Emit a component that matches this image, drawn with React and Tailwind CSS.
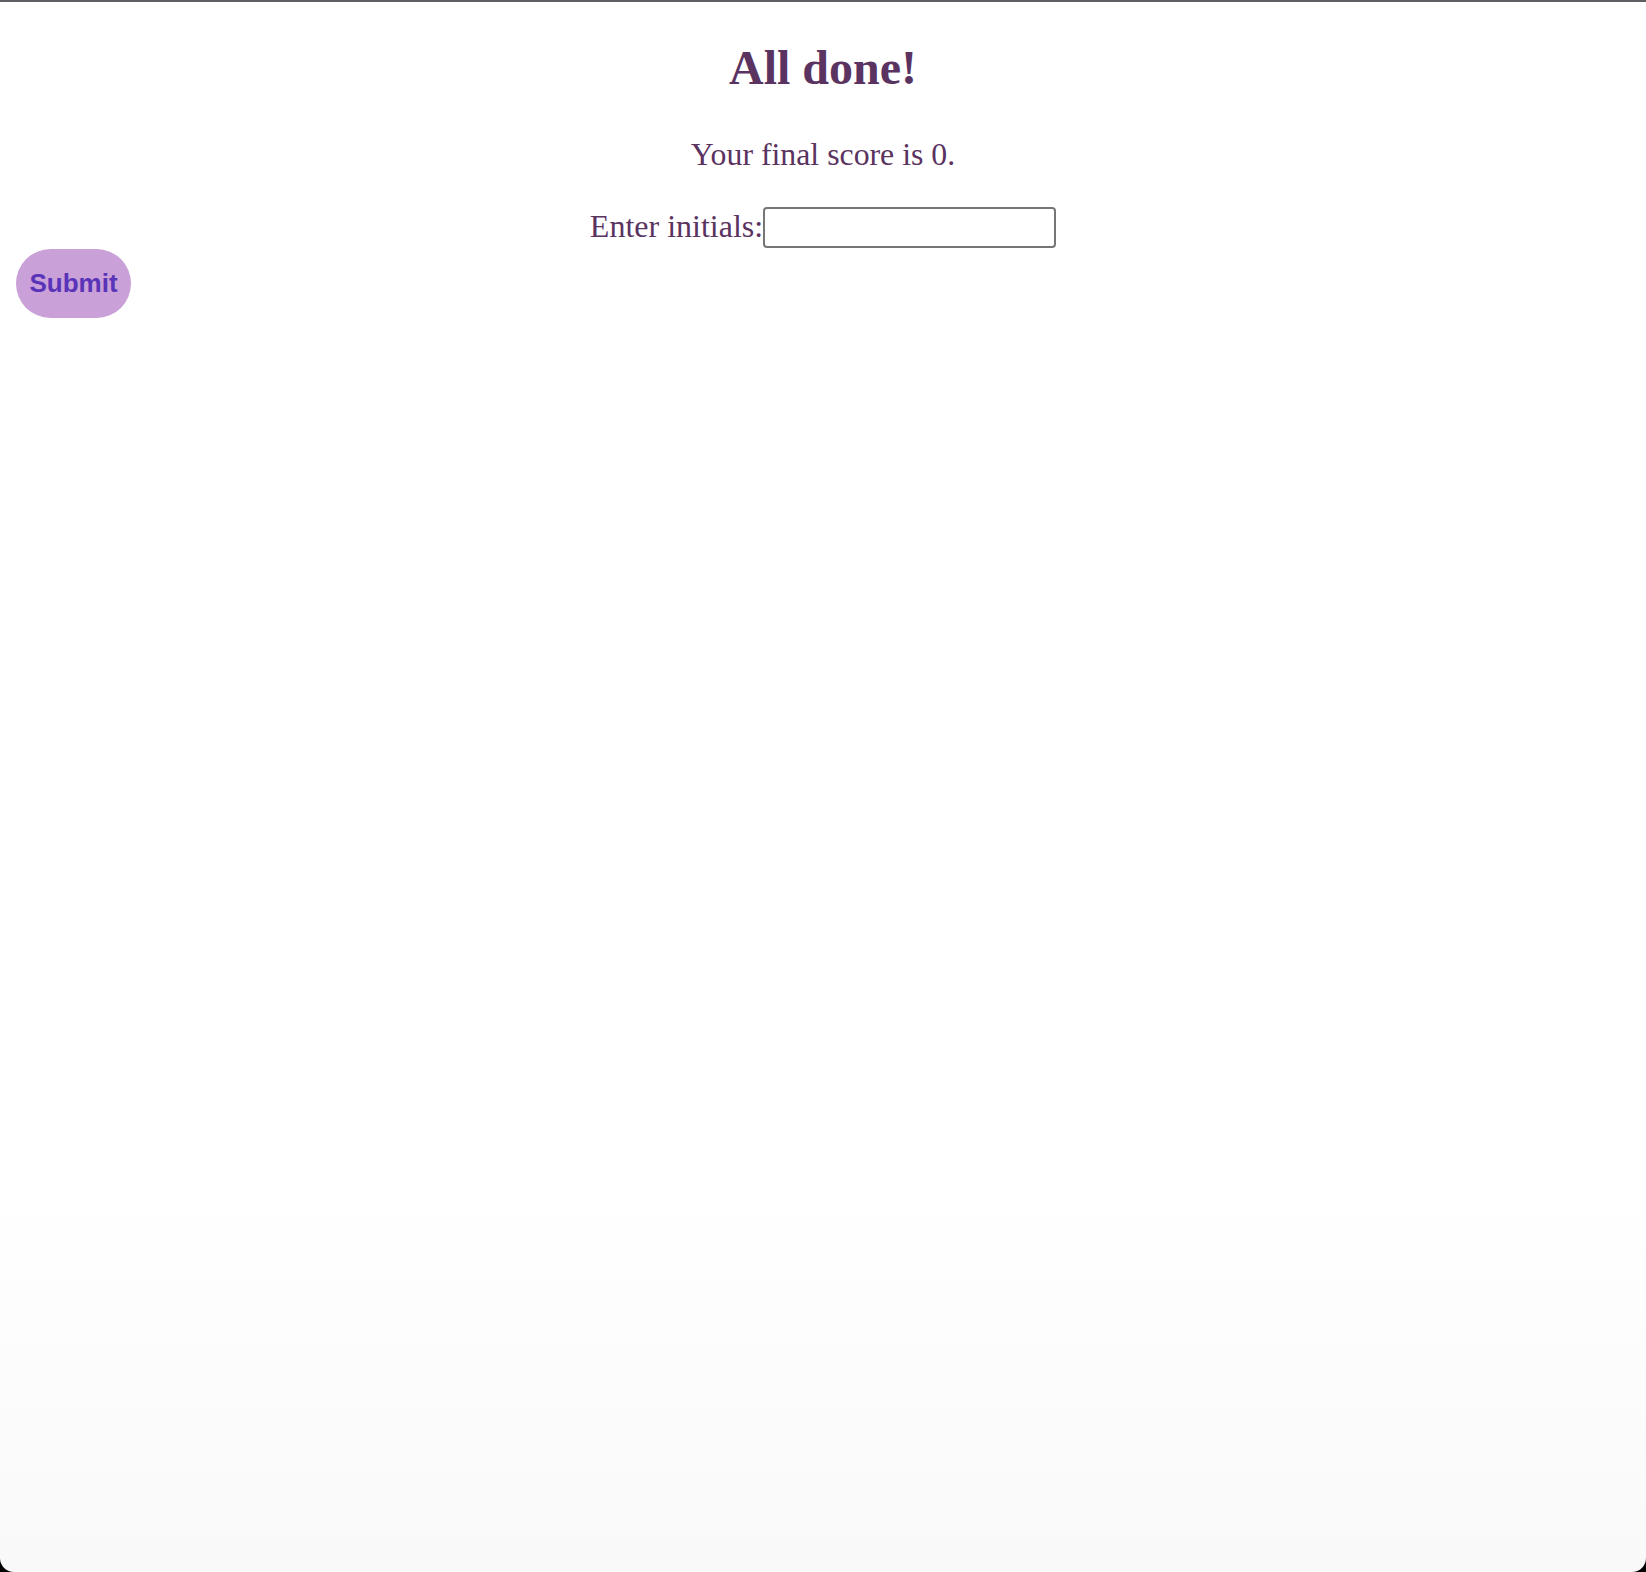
export default function App() {
  return (
    <div className="bg-black h-[1572px] w-full">
      <div
        className="h-full w-full bg-gradient-to-b from-white from-75% to-[#f9f9f9] border-t-2 border-[#5f5f63] rounded-b-[14px] flex flex-col text-[#5a3361]"
        style={{ fontFamily: '"Liberation Serif", "Times New Roman", serif' }}
      >
        {/* Heading */}
        <h1 className="mt-[39px] text-center font-bold text-[48px] leading-[54px]">
          All done!
        </h1>

        {/* Score */}
        <p className="mt-[42px] text-center text-[31.8px] leading-[36px]">
          Your final score is 0.
        </p>

        {/* Initials form */}
        <div className="mt-[28px] flex items-start justify-center">
          <label htmlFor="initials" className="mt-[7px] text-[32px] leading-[36px]">
            Enter initials:
          </label>
          <input
            id="initials"
            type="text"
            className="mt-[6px] w-[293px] h-[41px] border-2 border-[#767676] rounded-[4px] bg-white"
          />
        </div>

        <div className="mt-px pl-4">
          <button
            type="button"
            className="w-[115px] h-[69px] rounded-full bg-[#c9a0d7] text-[#5a34b8] font-bold text-[26px]"
            style={{ fontFamily: '"Liberation Sans", Arial, sans-serif' }}
          >
            Submit
          </button>
        </div>
      </div>
    </div>
  );
}
